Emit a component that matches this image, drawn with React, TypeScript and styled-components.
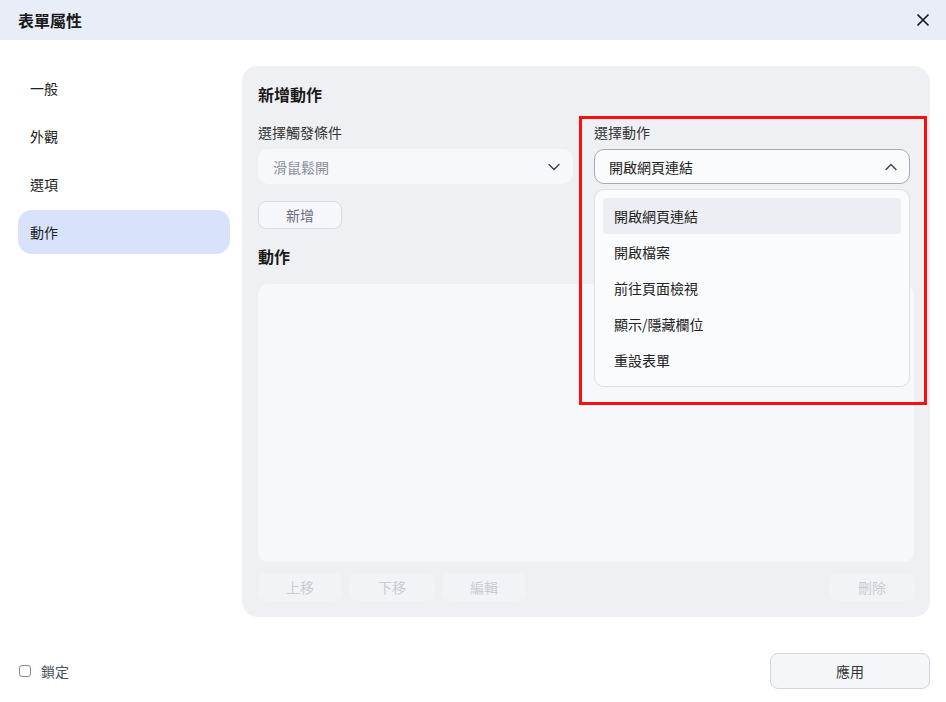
import React, { useState } from 'react';
import styled, { createGlobalStyle } from 'styled-components';

const GlobalStyle = createGlobalStyle`
    html, body {
        margin: 0;
        padding: 0;
        background: #ffffff;
    }
    body {
        font-family: "Noto Sans CJK TC", "Noto Sans", "Liberation Sans", sans-serif;
        color: #222;
    }
    * {
        box-sizing: border-box;
    }
`;

const Dialog = styled.div`
    width: 946px;
    height: 702px;
    display: flex;
    flex-direction: column;
    background: #ffffff;
    overflow: hidden;
`;

const Header = styled.div`
    height: 40px;
    flex: none;
    display: flex;
    align-items: center;
    justify-content: space-between;
    padding: 0 11px 0 18px;
    background-color: #e9edf8;
`;

const Title = styled.h1`
    margin: 0;
    font-size: 16px;
    font-weight: 700;
    color: #1a1a1a;
`;

const CloseButton = styled.button`
    width: 24px;
    height: 24px;
    padding: 0;
    border: none;
    background: none;
    display: flex;
    align-items: center;
    justify-content: center;
    cursor: pointer;
    color: #1a1a1a;
`;

const Body = styled.div`
    display: flex;
    gap: 12px;
    padding: 26px 16px 0 18px;
`;

const Sidebar = styled.nav`
    width: 212px;
    flex: none;
    display: flex;
    flex-direction: column;
    gap: 4px;
`;

const NavItem = styled.div<{ $active?: boolean }>`
    height: 44px;
    display: flex;
    align-items: center;
    padding-left: 12px;
    border-radius: 14px;
    font-size: 14px;
    color: #222;
    background-color: ${(p) => (p.$active ? '#d9e2fb' : 'transparent')};
    cursor: pointer;
`;

const Panel = styled.section`
    flex: 1;
    height: 551px;
    display: flex;
    flex-direction: column;
    padding: 16px;
    background-color: #eff0f4;
    border-radius: 16px;
`;

const SectionTitle = styled.h2`
    margin: 0;
    height: 24px;
    line-height: 24px;
    font-size: 16px;
    font-weight: 700;
    color: #1a1a1a;
`;

const FieldGrid = styled.div`
    display: grid;
    grid-template-columns: 315px 316px;
    column-gap: 21px;
    margin-top: 16px;
`;

const Field = styled.div`
    position: relative;
    display: flex;
    flex-direction: column;
    gap: 7px;
`;

const Label = styled.label`
    font-size: 14px;
    line-height: 20px;
    color: #333;
`;

const Select = styled.div<{ $open?: boolean }>`
    height: 35px;
    display: flex;
    align-items: center;
    justify-content: space-between;
    padding: 0 12px 0 14px;
    border-radius: 10px;
    border: 1px solid ${(p) => (p.$open ? '#a7abb8' : 'transparent')};
    background-color: ${(p) => (p.$open ? '#fafbfd' : '#f7f8fb')};
    font-size: 14px;
    color: ${(p) => (p.$open ? '#222' : '#8a8f9c')};
    cursor: pointer;
`;

const Menu = styled.ul`
    position: absolute;
    left: 0;
    right: 0;
    top: 67px;
    margin: 0;
    padding: 8px;
    list-style: none;
    background-color: #fafbfd;
    border: 1px solid #dcdfe7;
    border-radius: 10px;
    z-index: 5;
`;

const MenuItem = styled.li<{ $selected?: boolean }>`
    height: 36px;
    display: flex;
    align-items: center;
    padding-left: 11px;
    border-radius: 4px;
    font-size: 14px;
    color: #222;
    background-color: ${(p) => (p.$selected ? '#eceef4' : 'transparent')};
    cursor: pointer;
`;

const Highlight = styled.div`
    position: absolute;
    left: 579px;
    top: 116px;
    width: 348px;
    height: 289px;
    border: 3px solid #ff0d0d;
    pointer-events: none;
    z-index: 10;
`;

const SmallButton = styled.button<{ $disabled?: boolean }>`
    width: 84px;
    height: 28px;
    padding: 0;
    border-radius: 8px;
    border: 1px solid ${(p) => (p.$disabled ? 'transparent' : '#d8dbe5')};
    background-color: ${(p) => (p.$disabled ? '#f2f3f6' : '#f6f7fa')};
    font-family: inherit;
    font-size: 14px;
    color: ${(p) => (p.$disabled ? '#c9ccd4' : '#6b7080')};
    cursor: ${(p) => (p.$disabled ? 'default' : 'pointer')};
`;

const AddRow = styled.div`
    margin-top: 17px;
    display: flex;
`;

const ActionsTitle = styled(SectionTitle)`
    margin-top: 15px;
`;

const ActionList = styled.div`
    margin-top: 16px;
    height: 279px;
    background-color: #f7f8fb;
    border-radius: 10px;
`;

const ButtonRow = styled.div`
    margin-top: 11px;
    display: flex;
    gap: 8px;
`;

const Spacer = styled.div`
    flex: 1;
`;

const Footer = styled.div`
    flex: none;
    display: flex;
    align-items: center;
    justify-content: space-between;
    padding: 36px 16px 0 19px;
`;

const LockLabel = styled.label`
    display: flex;
    align-items: center;
    gap: 10px;
    font-size: 14px;
    color: #4a5060;
    cursor: pointer;
`;

const CheckBox = styled.span`
    width: 12px;
    height: 12px;
    border: 1.5px solid #858a98;
    border-radius: 3px;
    background: #fff;
`;

const ApplyButton = styled.button`
    width: 160px;
    height: 36px;
    border-radius: 8px;
    border: 1px solid #d3d6e2;
    background-color: #f5f6fa;
    font-family: inherit;
    font-size: 14px;
    color: #333;
    cursor: pointer;
`;

const Chevron: React.FC<{ up?: boolean }> = ({ up }) => (
    <svg width="12" height="8" viewBox="0 0 12 8" fill="none">
        <path
            d={up ? 'M1 6.5 L6 1.5 L11 6.5' : 'M1 1.5 L6 6.5 L11 1.5'}
            stroke="#3a3f4b"
            strokeWidth="1.4"
            strokeLinecap="round"
            strokeLinejoin="round"
        />
    </svg>
);

const navItems = ['一般', '外觀', '選項', '動作'];
const actions = ['開啟網頁連結', '開啟檔案', '前往頁面檢視', '顯示/隱藏欄位', '重設表單'];

const App: React.FC = () => {
    const [active, setActive] = useState<string>('動作');
    const [selected, setSelected] = useState<string>('開啟網頁連結');

    return (
        <>
            <GlobalStyle />
            <Dialog>
                <Header>
                    <Title>表單屬性</Title>
                    <CloseButton aria-label="close">
                        <svg width="14" height="14" viewBox="0 0 14 14">
                            <path d="M1.5 1.5 L12.5 12.5 M12.5 1.5 L1.5 12.5" stroke="#1a1a1a" strokeWidth="1.7" />
                        </svg>
                    </CloseButton>
                </Header>
                <Body>
                    <Sidebar>
                        {navItems.map((item) => (
                            <NavItem key={item} $active={item === active} onClick={() => setActive(item)}>
                                {item}
                            </NavItem>
                        ))}
                    </Sidebar>
                    <Panel>
                        <SectionTitle>新增動作</SectionTitle>
                        <FieldGrid>
                            <Field>
                                <Label>選擇觸發條件</Label>
                                <Select>
                                    滑鼠鬆開
                                    <Chevron />
                                </Select>
                            </Field>
                            <Field>
                                <Label>選擇動作</Label>
                                <Select $open>
                                    {selected}
                                    <Chevron up />
                                </Select>
                                <Menu>
                                    {actions.map((a) => (
                                        <MenuItem key={a} $selected={a === selected} onClick={() => setSelected(a)}>
                                            {a}
                                        </MenuItem>
                                    ))}
                                </Menu>
                            </Field>
                        </FieldGrid>
                        <AddRow>
                            <SmallButton>新增</SmallButton>
                        </AddRow>
                        <ActionsTitle>動作</ActionsTitle>
                        <ActionList />
                        <ButtonRow>
                            <SmallButton $disabled>上移</SmallButton>
                            <SmallButton $disabled>下移</SmallButton>
                            <SmallButton $disabled>編輯</SmallButton>
                            <Spacer />
                            <SmallButton $disabled>刪除</SmallButton>
                        </ButtonRow>
                    </Panel>
                </Body>
                <Footer>
                    <LockLabel>
                        <CheckBox />
                        鎖定
                    </LockLabel>
                    <ApplyButton>應用</ApplyButton>
                </Footer>
            </Dialog>
            <Highlight />
        </>
    );
};

export default App;
